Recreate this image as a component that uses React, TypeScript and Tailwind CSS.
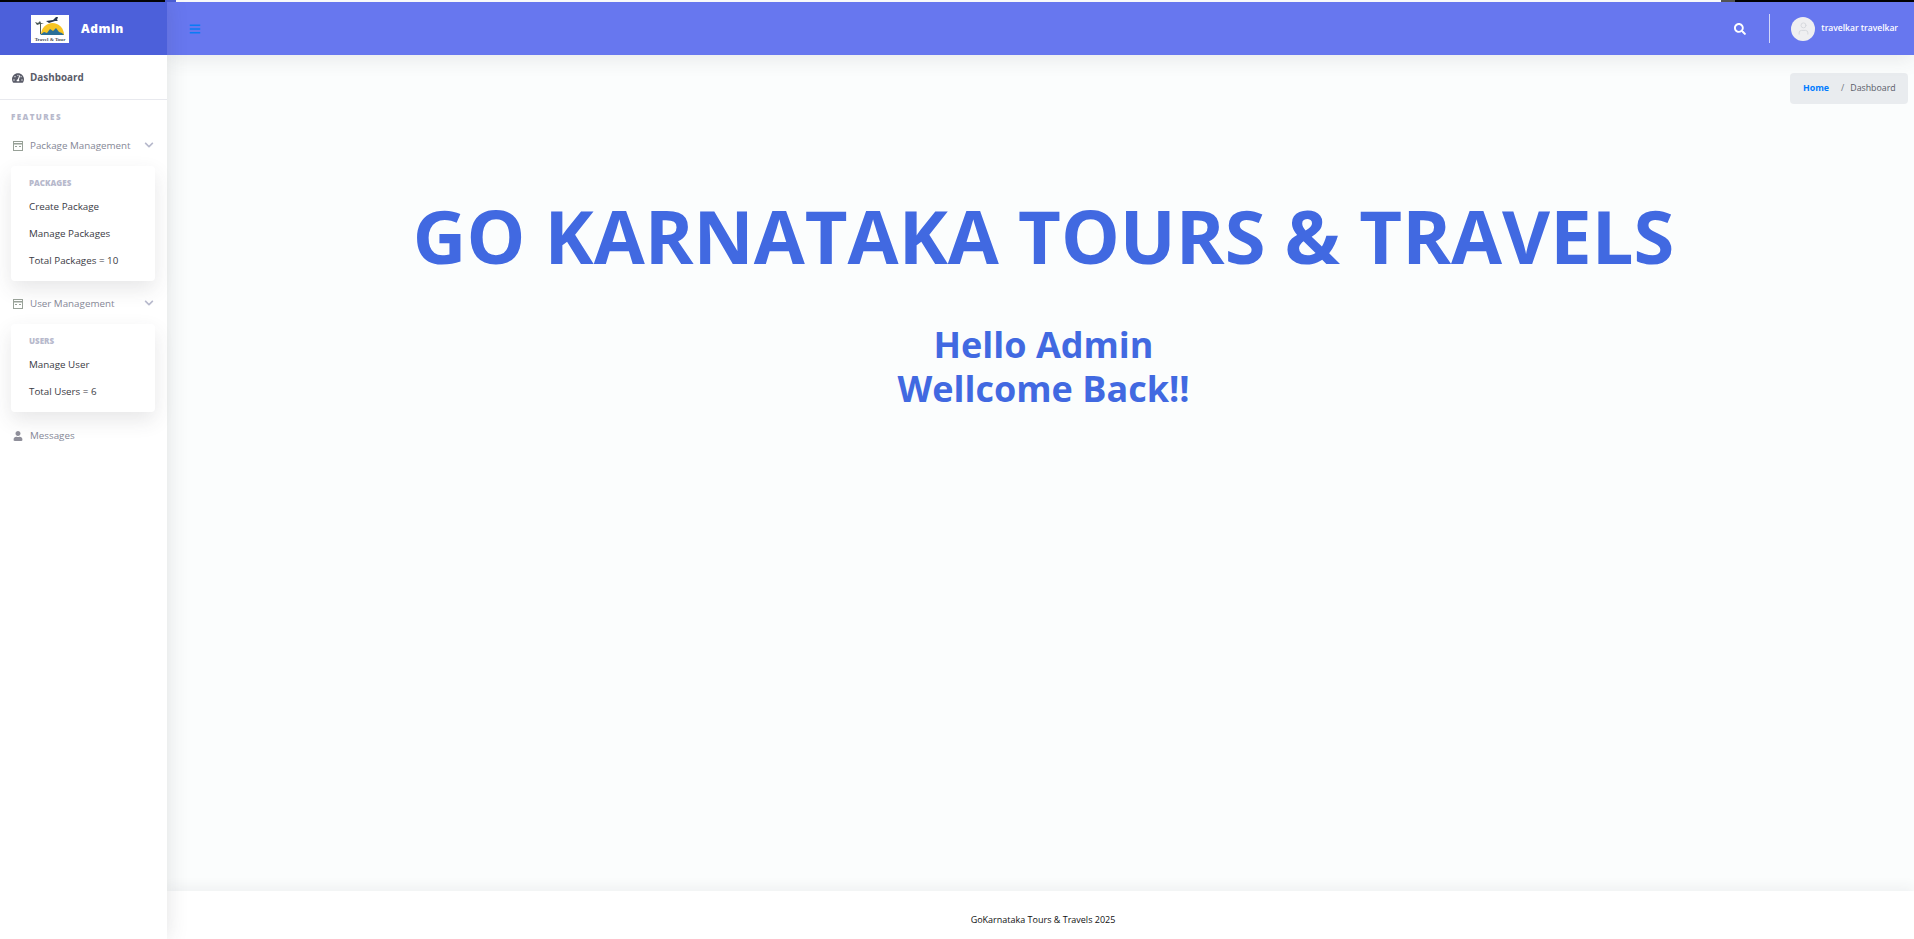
import { User } from 'lucide-react'
import { FaTachometerAlt, FaUser, FaBars, FaSearch, FaChevronDown } from 'react-icons/fa'

function Logo() {
  return (
    <svg width="38" height="28" viewBox="0 0 38 28" className="bg-white">
      <path d="M10 20a11.5 12 0 0 1 23 0z" fill="#f7c524" />
      <path d="M9 20l4-3 3 1 3-4 3 2 3-3 3 4 3 1 2 2z" fill="#2a6f97" />
      <path d="M15 6l7-1 3-3 2 0-1 3 1 1-3 0-6 2z" fill="#27384f" />
      <path d="M4 7l3 1 2-2 1 2 3 1-3 0 0 10-1 0 0-10-3 1z" fill="#4c5a55" />
      <text x="19" y="26" textAnchor="middle" fontSize="5" fontFamily="Liberation Serif, serif" fontWeight="700" fill="#3f4a52">Travel &amp; Tour</text>
    </svg>
  )
}

function CalendarIcon() {
  return (
    <svg width="10" height="10" viewBox="0 0 10 10" className="shrink-0 text-[#98a198]" fill="none">
      <rect x="0.5" y="0.5" width="9" height="9" stroke="currentColor" />
      <rect x="1" y="2" width="8" height="1.5" fill="currentColor" />
      <rect x="2" y="5" width="2" height="1" fill="currentColor" />
      <rect x="6" y="5" width="2" height="1" fill="currentColor" />
    </svg>
  )
}

function SubMenu({ title, items }: { title: string; items: string[] }) {
  return (
    <div className="mt-[4px] mr-[12px] ml-[11px] rounded-[4px] bg-white pt-[8px] pb-[7px] shadow-[0_8px_20px_rgba(58,59,69,0.12)]">
      <div className="mb-[2px] h-[17px] pl-[18px] text-[8px] leading-[17px] font-extrabold text-[#b7b9cc] uppercase">{title}</div>
      {items.map((item) => (
        <div key={item} className="h-[27px] pl-[18px] text-[9.8px] leading-[27px] text-[#3a3b45]">{item}</div>
      ))}
    </div>
  )
}

function NavItem({ label }: { label: string }) {
  return (
    <div className="flex h-[32px] items-center pr-[13px] pl-[13px] text-[9.8px] whitespace-nowrap text-[#858796]">
      <CalendarIcon />
      <span className="ml-[7px] flex-1">{label}</span>
      <FaChevronDown size={10} className="mb-[3px] text-[#b7b9cc]" />
    </div>
  )
}

export default function App() {
  return (
    <div className="flex h-[939px] w-[1914px] flex-col overflow-hidden bg-[#fbfdfd] font-['Open_Sans',sans-serif]">
      <div className="flex h-[2px] shrink-0">
        <div className="w-[165px] bg-black" />
        <div className="w-[11px] bg-[#4c60da]" />
        <div className="flex-1 bg-white" />
        <div className="w-[14px] bg-[#555555]" />
        <div className="w-[179px] bg-black" />
      </div>
      <div className="flex min-h-0 flex-1">
        <aside className="z-10 flex w-[167px] shrink-0 flex-col bg-white shadow-[0_0_20px_rgba(58,59,69,0.15)]">
          <div className="flex h-[53px] shrink-0 items-center bg-[#4c60da] pl-[31px]">
            <Logo />
            <span className="ml-[12px] text-[12px] font-extrabold tracking-[0.5px] text-white">Admin</span>
          </div>
          <div className="flex h-[45px] shrink-0 items-center border-b border-[#e8e9ee] pt-[1px] pl-[12px] text-[9.9px] font-bold text-[#5a5c69]">
            <FaTachometerAlt size={12} />
            <span className="ml-[6px]">Dashboard</span>
          </div>
          <div className="mt-[10px] h-[14px] pl-[11px] text-[8px] leading-[14px] font-extrabold tracking-[1.4px] text-[#b7b9cc]">FEATURES</div>
          <div className="mt-[6px]">
            <NavItem label="Package Management" />
            <SubMenu title="Packages" items={['Create Package', 'Manage Packages', 'Total Packages = 10']} />
            <div className="mt-[7px]">
              <NavItem label="User Management" />
            </div>
            <SubMenu title="Users" items={['Manage User', 'Total Users = 6']} />
          </div>
          <div className="mt-[8px] flex h-[32px] items-center pl-[13px] text-[9.8px] text-[#858796]">
            <FaUser size={10} className="text-[#8f8f9a]" />
            <span className="ml-[7px]">Messages</span>
          </div>
        </aside>

        <div className="flex min-w-0 flex-1 flex-col">
          <header className="z-[5] flex h-[53px] shrink-0 items-center bg-[#6777ef] pr-[16px] pl-[22px] shadow-[0_4px_20px_rgba(58,59,69,0.1)]">
            <FaBars size={12} className="text-[#0a7cf5]" />
            <div className="flex-1" />
            <FaSearch size={12} className="text-white" />
            <div className="mr-[21px] ml-[23px] h-[29px] w-px bg-white/70" />
            <div className="flex h-[24px] w-[24px] items-center justify-center rounded-full bg-[#efeff1]">
              <User size={15} strokeWidth={1.5} className="text-[#d5d7dc]" />
            </div>
            <span className="ml-[6px] text-[8.5px] font-semibold text-white">travelkar travelkar</span>
          </header>

          <main className="flex min-h-0 flex-1 flex-col">
            <div className="flex justify-end pt-[18px] pr-[6px]">
              <div className="flex h-[31px] w-[118px] items-center rounded-[4px] bg-[#e9ecef] pt-[1px] pl-[13px] text-[8.8px] whitespace-nowrap">
                <span className="font-bold text-[#007bff]">Home</span>
                <span className="mr-[6px] ml-[12px] text-[#6c757d]">/</span>
                <span className="font-medium text-[#5a5c69]">Dashboard</span>
              </div>
            </div>
            <h1 className="mt-[87px] pl-[6px] text-center text-[74px] leading-[90px] font-bold text-[#4169e1]">GO KARNATAKA TOURS &amp; TRAVELS</h1>
            <h2 className="mt-[42px] pl-[6px] text-center text-[36px] leading-[44px] font-bold text-[#4169e1]">
              Hello Admin
              <br />
              Wellcome Back!!
            </h2>
          </main>

          <footer className="z-[5] flex h-[48px] shrink-0 items-center justify-center bg-white pt-[10px] pl-[5px] text-[9px] text-[#111111] shadow-[0_-4px_12px_rgba(58,59,69,0.06)]">
            GoKarnataka Tours &amp; Travels 2025
          </footer>
        </div>
      </div>
    </div>
  )
}
